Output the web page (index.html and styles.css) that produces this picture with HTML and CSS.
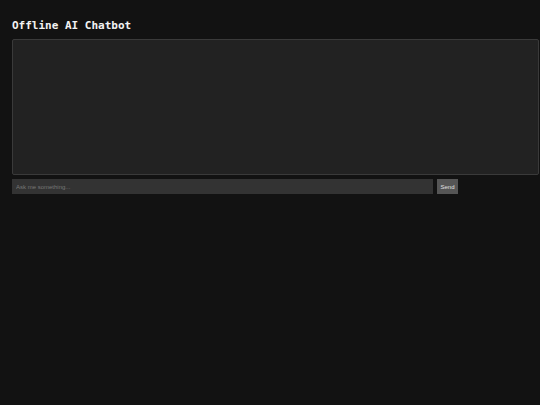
FILE: index.html
```html
<!DOCTYPE html>
<html>
<head>
<meta charset="utf-8">
<link rel="stylesheet" href="styles.css">
</head>
<body>
<h1 class="title">Offline AI Chatbot</h1>
<div class="chat"></div>
<div class="composer">
  <input class="prompt" type="text" placeholder="Ask me something...">
  <button class="send">Send</button>
</div>
</body>
</html>
```
FILE: styles.css
```css
html, body {
  margin: 0;
  background: #121212;
}
body {
  padding: 12px;
  color: #eee;
  font-family: "Liberation Sans", Arial, sans-serif;
}
.title {
  font-family: "DejaVu Sans Mono", monospace;
  font-weight: bold;
  font-size: 11px;
  line-height: 14px;
  margin: 7px 0 6px 0;
  color: #f2f2f2;
}
.chat {
  box-sizing: border-box;
  width: 527px;
  height: 136px;
  background: #222;
  border: 1px solid #3a3a3a;
  border-radius: 2px;
}
.composer {
  display: flex;
  gap: 4px;
  margin-top: 4px;
  align-items: flex-start;
}
.prompt {
  box-sizing: border-box;
  width: 421px;
  height: 15px;
  margin: 0;
  padding: 0 4px;
  border: none;
  background: #333;
  color: #ddd;
  font-family: "Liberation Sans", Arial, sans-serif;
  font-size: 6px;
  outline: none;
}
.prompt::placeholder {
  color: #777;
}
.send {
  box-sizing: border-box;
  width: 21px;
  height: 15px;
  margin: 0;
  padding: 0;
  border: none;
  background: #555;
  color: #e0e0e0;
  font-family: "Liberation Sans", Arial, sans-serif;
  font-size: 6px;
}
```
